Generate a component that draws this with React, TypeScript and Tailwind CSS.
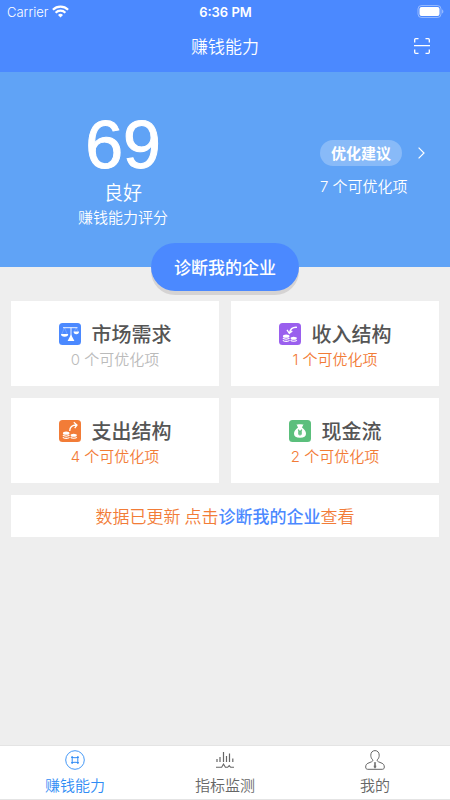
import type { ReactNode } from 'react';

type Category = {
  title: string;
  count: number;
  icon: ReactNode;
};

function WifiIcon() {
  return (
    <svg width="17" height="14" viewBox="0 0 17 14" fill="#fff" aria-hidden="true">
      <path d="M8.500 12.400 6 9.900a3.600 3.600 0 0 1 5 0Z" />
      <g fill="none" stroke="#fff" strokeWidth="2.200">
        <path d="M.9 4.700a10.900 10.900 0 0 1 15.200 0" />
        <path d="M3.600 7.700a7 7 0 0 1 9.800 0" />
      </g>
    </svg>
  );
}

function BatteryIcon() {
  return (
    <svg width="27" height="14" viewBox="0 0 27 14" aria-hidden="true">
      <rect x="1" y="0.5" width="23" height="12" rx="3.500" fill="none" stroke="#fff" strokeOpacity="0.4" />
      <rect x="2.500" y="2" width="20" height="9" rx="2" fill="#fff" />
      <path d="M25.200 4.500v4c.7-.3 1.100-1.100 1.100-2s-.4-1.700-1.100-2Z" fill="#fff" fillOpacity="0.5" />
    </svg>
  );
}

function ScanIcon() {
  return (
    <svg width="16" height="16" viewBox="0 0 16 16" fill="none" stroke="#fff" strokeWidth="1.300" aria-hidden="true">
      <path d="M.7 4.500V1.700a1 1 0 0 1 1-1h2.800M11.500.7h2.800a1 1 0 0 1 1 1v2.800M15.300 11.500v2.800a1 1 0 0 1-1 1h-2.800M4.500 15.300H1.700a1 1 0 0 1-1-1v-2.800M0 7.700h16" />
    </svg>
  );
}

function ScaleIcon() {
  return (
    <svg width="22" height="22" viewBox="0 0 22 22" aria-hidden="true">
      <rect width="22" height="22" rx="3.500" fill="#4b89ff" />
      <g stroke="#fff" fill="none">
        <path d="M4 4.700h14.500M12 4.700v9" strokeWidth="0.900" />
        <path d="m5.500 4.700-2.700 6.300M5.500 4.700l2.700 6.300M17.200 4.700l-2 4M17.200 4.700l2 4" strokeWidth="0.400" strokeOpacity="0.500" />
      </g>
      <path d="M2 11h7.200a3.600 2.800 0 0 1-7.200 0ZM14.600 8.600h5.400a2.700 2.700 0 0 1-5.400 0ZM12 11.500l3.400 6.500H8.600Z" fill="#fff" />
    </svg>
  );
}

function Coins() {
  return (
    <g fill="#fff">
      <ellipse cx="7.200" cy="13.200" rx="3.300" ry="1.600" />
      <ellipse cx="14.700" cy="15.200" rx="3.100" ry="1.500" />
      <g fill="none" stroke="#fff" strokeWidth="1.100">
        <path d="M3.900 15.100c.8 1.500 5.800 1.500 6.600 0M3.900 17.200c.8 1.500 5.800 1.500 6.600 0M11.600 17.200c.8 1.400 5.400 1.400 6.200 0" />
      </g>
    </g>
  );
}

function IncomeIcon() {
  return (
    <svg width="22" height="22" viewBox="0 0 22 22" aria-hidden="true">
      <rect width="22" height="22" rx="3.500" fill="#9a5fee" />
      <Coins />
      <path d="M18 4.300c-4-.3-6.800 1.500-7.500 5.700M8 6.800l2.300 3.500 3-2.400" fill="none" stroke="#fff" strokeWidth="1.300" />
    </svg>
  );
}

function ExpenseIcon() {
  return (
    <svg width="22" height="22" viewBox="0 0 22 22" aria-hidden="true">
      <rect width="22" height="22" rx="3.500" fill="#f27c37" />
      <Coins />
      <path d="M10.700 11c.1-3.500 2.300-6 6.800-6M14.800 2.300 18 5l-2.300 3.200" fill="none" stroke="#fff" strokeWidth="1.300" />
    </svg>
  );
}

function CashIcon() {
  return (
    <svg width="22" height="22" viewBox="0 0 22 22" aria-hidden="true">
      <rect width="22" height="22" rx="3.500" fill="#5bbf7c" />
      <path d="M7.500 4.200c1.200.6 2 .1 3.500.1s2.300.5 3.500-.1L13 7.500c2.600 1.700 4 4 4 6.300 0 2.800-2 4-6 4s-6-1.200-6-4c0-2.300 1.400-4.600 4-6.300Z" fill="#fff" />
      <path d="m9.200 9.700 1.800 2.500 1.800-2.500M11 12v3.600M9 12.200h4M9 13.900h4" stroke="#5bbf7c" strokeWidth="1.200" fill="none" />
    </svg>
  );
}

function CoinTabIcon() {
  return (
    <svg width="20" height="20" viewBox="0 0 20 20" fill="none" stroke="currentColor" aria-hidden="true">
      <circle cx="10" cy="10" r="9.300" strokeWidth="0.900" />
      <path d="M7.200 6v8M12.800 6v8M6 7.200c2.600.7 5.400.7 8 0M6 12.800c2.600-.7 5.400-.7 8 0" strokeWidth="1" />
    </svg>
  );
}

function MonitorTabIcon() {
  return (
    <svg width="20" height="20" viewBox="0 0 20 20" fill="none" stroke="currentColor" aria-hidden="true">
      <path d="M2 9v3M5 7v5M8.500 2v10M11.500 6v6M14.500 3.500v8.500M17.800 8.500v3.500" strokeWidth="1.200" />
      <path d="M1 17.300h5.700L8.500 14l1.900 3.300h2.300l1.500-1.700 1.500 1.700H19" strokeWidth="1.100" />
    </svg>
  );
}

function ProfileTabIcon() {
  return (
    <svg width="20" height="20" viewBox="0 0 20 20" fill="none" stroke="currentColor" strokeWidth="1" aria-hidden="true">
      <path d="M7.700 9.800C6.400 8.700 5.800 7 5.800 5.200 5.800 2.400 7.500.6 10 .6s4.200 1.800 4.200 4.600c0 1.800-.6 3.500-1.900 4.600-.4 1 .1 1.500 1.200 2l3.600 1.500c1.500.7 2.200 1.900 2.200 3.700 0 1.500-.6 2.300-2 2.300H2.700c-1.400 0-2-.8-2-2.300 0-1.800.7-3 2.200-3.700l3.600-1.500c1.100-.5 1.600-1 1.200-2Z" />
      <path d="M9.300 12.500h1.400l-.3 1.500.6 3-1 1.300-1-1.300.6-3Z" fill="currentColor" strokeWidth="0.500" />
    </svg>
  );
}

const categories: Category[] = [
  { title: '市场需求', count: 0, icon: <ScaleIcon /> },
  { title: '收入结构', count: 1, icon: <IncomeIcon /> },
  { title: '支出结构', count: 4, icon: <ExpenseIcon /> },
  { title: '现金流', count: 2, icon: <CashIcon /> },
];

const tabs = [
  { label: '赚钱能力', icon: <CoinTabIcon />, active: true },
  { label: '指标监测', icon: <MonitorTabIcon />, active: false },
  { label: '我的', icon: <ProfileTabIcon />, active: false },
];

function CategoryCard({ title, count, icon }: Category) {
  return (
    <button type="button" className="flex flex-col items-center bg-white pt-[19px] pb-[15px]">
      <span className="flex items-center gap-[11px] text-[20px] leading-7 font-medium text-[#555]">
        {icon}
        {title}
      </span>
      <span className={`text-[15px] leading-[22px] ${count > 0 ? 'text-[#f27c37]' : 'text-[#bbb]'}`}>
        <span className="font-[Inter]">{count} </span>
        个可优化项
      </span>
    </button>
  );
}

export default function App() {
  return (
    <div className="flex min-h-screen flex-col bg-[#eee] font-['Noto_Sans_CJK_SC',sans-serif] font-[350]">
      <header className="bg-[#4b89ff] text-white">
        <div className="grid h-6 grid-cols-3 items-center pr-1.5 pl-[7px] font-[Inter] text-[13px] leading-6">
          <span className="flex items-center gap-1">
            Carrier
            <WifiIcon />
          </span>
          <span className="text-center font-semibold">6:36 PM</span>
          <span className="flex justify-end">
            <BatteryIcon />
          </span>
        </div>
        <div className="grid h-12 grid-cols-3 items-center px-5 pb-[5px]">
          <h1 className="col-start-2 text-center text-[17px] leading-6 font-[350]">赚钱能力</h1>
          <button type="button" aria-label="扫一扫" className="justify-self-end">
            <ScanIcon />
          </button>
        </div>
      </header>

      <main className="flex flex-1 flex-col">
        <section className="flex justify-between bg-[#60a3f6] pt-9 pr-[25px] pb-[37px] pl-[78px] text-white">
          <div className="flex flex-col items-center">
            <span className="font-['Liberation_Sans'] text-[68px] leading-[72px] [-webkit-text-stroke:1px_white]">69</span>
            <span className="text-[19px] leading-6">良好</span>
            <span className="text-[15px] leading-[26px]">赚钱能力评分</span>
          </div>
          <div className="flex flex-col gap-2 pt-8">
            <button type="button" className="flex items-center gap-4">
              <span className="rounded-full bg-white/25 px-[11px] text-[15px] leading-[26px] font-bold">优化建议</span>
              <svg width="7" height="12" viewBox="0 0 7 12" fill="none" stroke="#fff" strokeWidth="1.200" aria-hidden="true">
                <path d="m.6.600 5.400 5.400-5.400 5.400" />
              </svg>
            </button>
            <span className="text-[15px] leading-6">
              <span className="font-[Inter]">7 </span>
              个可优化项
            </span>
          </div>
        </section>

        {/* Button straddles the bottom edge of the score panel */}
        <div className="-mt-6 flex justify-center">
          <button type="button" className="rounded-full bg-[#4b89ff] px-[23px] text-[17px] leading-[48px] font-medium text-white shadow-[0_4px_0_#d5d3d3]">
            诊断我的企业
          </button>
        </div>

        <section className="grid grid-cols-2 gap-3 px-[11px] pt-[10px]">
          {categories.map((category) => (
            <CategoryCard key={category.title} {...category} />
          ))}
        </section>

        <p className="mx-[11px] mt-3 bg-white text-center text-[17px] leading-[42px] text-[#f27c37]">
          数据已更新 点击
          <a href="#diagnose" className="font-medium text-[#4b89ff]">诊断我的企业</a>
          查看
        </p>
      </main>

      <nav className="grid grid-cols-3 border-t border-b border-[#e4e4e4] bg-white pt-1 pb-0.5">
        {tabs.map((tab) => (
          <button
            key={tab.label}
            type="button"
            className={`flex flex-col items-center gap-[3px] text-[15px] leading-6 ${tab.active ? 'text-[#2f8cf5]' : 'text-[#666]'}`}
          >
            {tab.icon}
            {tab.label}
          </button>
        ))}
      </nav>
    </div>
  );
}
